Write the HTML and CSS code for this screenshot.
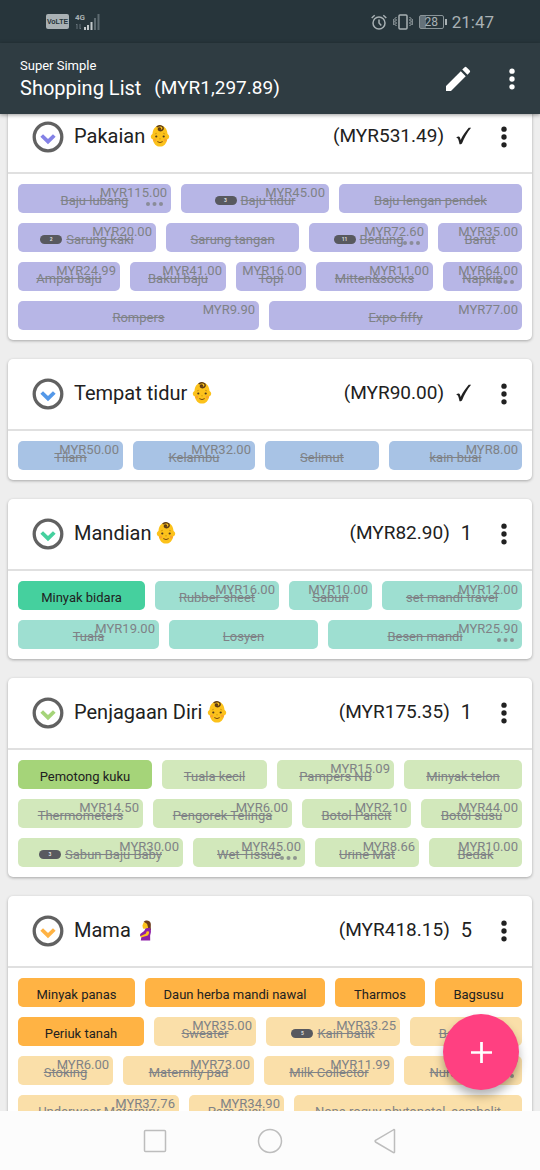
FILE: index.html
```
<!DOCTYPE html>
<html lang="ms">
<head>
<meta charset="utf-8">
<meta name="viewport" content="width=device-width, initial-scale=1">
<title>Shopping List</title>
<link rel="stylesheet" href="styles.css">
</head>
<body>
<svg class="sprite" aria-hidden="true">
  <symbol id="dots" viewBox="0 0 24 24"><circle cx="12" cy="3.500" r="2.900"/><circle cx="12" cy="12" r="2.900"/><circle cx="12" cy="20.500" r="2.900"/></symbol>
  <symbol id="more" viewBox="0 0 17 4"><circle cx="2" cy="2" r="2"/><circle cx="8.500" cy="2" r="2"/><circle cx="15" cy="2" r="2"/></symbol>
  <symbol id="fold" viewBox="0 0 32 32"><circle cx="16" cy="16" r="13.800" fill="none" stroke="#616161" stroke-width="3.300"/><path d="M9.700 14.500l6.300 6.200 6.300-6.200" fill="none" stroke="currentColor" stroke-width="3.800"/></symbol>
  <symbol id="check" viewBox="0 0 16 18"><path d="M.6 10.800c1.600-1.500 3-1.700 3.600-.8.5.8.7 2 .9 2.900C7.600 8 10.300 4.200 13.200.8h2.400C11.800 5.500 8.700 10.700 6.500 16.400c-.7.600-1.600.9-2.500.9C3.600 14.900 3 12.800 2.300 11.500c-.3-.5-.8-.7-1.700-.7z"/></symbol>
  <symbol id="baby" viewBox="0 0 20 22">
    <path d="M10 .6c4.200 0 7 3 7.500 8.200.2.700 1.700 1 1.700 2.700s-1 2.600-1.900 2.700C16.500 18.700 13.700 21.600 10 21.600S3.500 18.700 2.700 14.200C1.800 14.100.8 13.200.8 11.500s1.500-2 1.700-2.700C3 3.600 5.800.6 10 .6z" fill="#fcc21b"/>
    <path d="M7.200 1.600C9.500.1 13 .7 13.200 3c.1 2-2.300 3.200-4 2.300-1.200-.7-.9-2.200.3-2.200.9 0 1 .8.600 1.100" fill="none" stroke="#5d3b14" stroke-width="1.500" stroke-linecap="round"/>
    <circle cx="6.300" cy="11.500" r="1.100" fill="#4e3a1e"/><circle cx="13.700" cy="11.500" r="1.100" fill="#4e3a1e"/>
    <path d="M4.900 9l2-.8M15.100 9l-2-.8M9.300 13.800h1.400" stroke="#c78f10" stroke-width=".8"/>
    <path d="M7.300 16.600q2.700 2 5.400 0" fill="none" stroke="#7a4b10" stroke-width="1"/>
    <circle cx="4.700" cy="15" r="1.500" fill="#fba52c"/><circle cx="15.300" cy="15" r="1.500" fill="#fba52c"/>
  </symbol>
  <symbol id="mother" viewBox="0 0 20 24">
    <path d="M7.500 3C9.500.8 14.300 1 15.100 4.600c.5 2.300-.3 4.200.4 7.400l-5 .5L10.500 6z" fill="#6d3c1b"/>
    <path d="M7.500 3.600c1.800.2 3 .9 3.800 2.200L12.500 10l-3.600.6c-1.700.2-2.400-.4-2.400-1.400l-.4-2z" fill="#fcc21b"/>
    <path d="M9.500 10.300l4.500-.7c1.300.9 1.600 3 1.300 5l-.8 3.400.1 5.500H4.300l.7-4.200c-1.600-.6-2-1.900-1-3.200L8 13z" fill="#8e1fa8"/>
    <path d="M13.300 13.500c.4 2-.5 4-2.200 4.900l-6.600 1.900-.8-1.500 6-2.700 1.200-2.800z" fill="#fcc21b"/>
  </symbol>
</svg>

<div class="app">
  <div class="status">
    <div class="status-side">
      <span class="volte">VoLTE</span>
      <svg class="signal" viewBox="0 0 26 18" role="img" aria-label="4G signal">
        <text x="0" y="7">4G</text>
        <path d="M9 14h2v3H9zM12 12h2v5h-2zM15.500 9h2v8h-2z" fill="#c3c9cb"/>
        <path d="M19 5h2v12h-2zM22.500 1h2v16h-2z" fill="#5d6a70"/>
        <path d="M2 11v5M5 11v5M1 12l1-1M5 16l1-1" stroke="#66737a" fill="none"/>
      </svg>
    </div>
    <div class="status-side">
      <svg class="alarm line" viewBox="0 0 16 16" role="img" aria-label="Alarm"><circle cx="8" cy="9" r="6"/><path d="M8 5.500V9l2.300 2.500M.7 4l3-2.700M15.300 4l-3-2.700"/></svg>
      <svg class="vibrate line" viewBox="0 0 20 16" role="img" aria-label="Vibrate"><rect x="6" y="1" width="8" height="14" rx="1"/><path d="M3.500 3L2 4.500 3.500 6 2 7.500 3.500 9 2 10.500 3.500 12M16.500 3L18 4.500 16.500 6 18 7.500 16.500 9 18 10.500 16.500 12M.8 5v6M19.200 5v6" stroke-width="1"/></svg>
      <span class="battery">28</span>
      <span class="clock">21:47</span>
    </div>
  </div>

  <header class="toolbar">
    <div class="titles">
      <div class="subtitle">Super Simple</div>
      <h1 class="title"><span>Shopping List</span><span class="total">(MYR1,297.89)</span></h1>
    </div>
    <button class="icon-btn" aria-label="Edit"><svg class="pencil" viewBox="0 0 24 24"><path d="M3 17.250V21h3.750L17.800 9.900l-3.700-3.700zM20.700 7.200a1.200 1.200 0 0 0 0-1.700l-2.200-2.200a1.200 1.200 0 0 0-1.700 0L15.200 4.900l3.900 3.900z"/></svg></button>
    <button class="icon-btn" aria-label="More options"><svg class="kebab"><use href="#dots"/></svg></button>
  </header>

  <main class="content">
    <div class="lists">

      <section class="card purple">
        <div class="card-head">
          <button class="fold" aria-label="Collapse"><svg><use href="#fold"/></svg></button>
          <h2>Pakaian</h2><svg class="emoji" role="img" aria-label="Baby"><use href="#baby"/></svg>
          <span class="sum">(MYR531.49)</span><svg class="check" role="img" aria-label="Done"><use href="#check"/></svg>
          <button class="icon-btn menu" aria-label="List options"><svg class="kebab"><use href="#dots"/></svg></button>
        </div>
        <div class="rows">
          <div class="row">
            <button class="chip done" style="flex-grow:153"><s>Baju lubang</s><span class="price">MYR115.00</span><svg class="more"><use href="#more"/></svg></button>
            <button class="chip done" style="flex-grow:148"><b class="qty">3</b><s>Baju tidur</s><span class="price">MYR45.00</span></button>
            <button class="chip done" style="flex-grow:183"><s>Baju lengan pendek</s></button>
          </div>
          <div class="row">
            <button class="chip done" style="flex-grow:138"><b class="qty">2</b><s>Sarung kaki</s><span class="price">MYR20.00</span></button>
            <button class="chip done" style="flex-grow:133"><s>Sarung tangan</s></button>
            <button class="chip done" style="flex-grow:119"><b class="qty">11</b><s>Bedung</s><span class="price">MYR72.60</span><svg class="more"><use href="#more"/></svg></button>
            <button class="chip done" style="flex-grow:84"><s>Barut</s><span class="price">MYR35.00</span></button>
          </div>
          <div class="row">
            <button class="chip done" style="flex-grow:102"><s>Ampai baju</s><span class="price">MYR24.99</span></button>
            <button class="chip done" style="flex-grow:96"><s>Bakul baju</s><span class="price">MYR41.00</span></button>
            <button class="chip done" style="flex-grow:70"><s>Topi</s><span class="price">MYR16.00</span></button>
            <button class="chip done" style="flex-grow:117"><s>Mitten&amp;socks</s><span class="price">MYR11.00</span></button>
            <button class="chip done" style="flex-grow:79"><s>Napkin</s><span class="price">MYR64.00</span><svg class="more"><use href="#more"/></svg></button>
          </div>
          <div class="row">
            <button class="chip done" style="flex-grow:241"><s>Rompers</s><span class="price">MYR9.90</span></button>
            <button class="chip done" style="flex-grow:253"><s>Expo fiffy</s><span class="price">MYR77.00</span></button>
          </div>
        </div>
      </section>

      <section class="card blue">
        <div class="card-head">
          <button class="fold" aria-label="Collapse"><svg><use href="#fold"/></svg></button>
          <h2>Tempat tidur</h2><svg class="emoji" role="img" aria-label="Baby"><use href="#baby"/></svg>
          <span class="sum">(MYR90.00)</span><svg class="check" role="img" aria-label="Done"><use href="#check"/></svg>
          <button class="icon-btn menu" aria-label="List options"><svg class="kebab"><use href="#dots"/></svg></button>
        </div>
        <div class="rows">
          <div class="row">
            <button class="chip done" style="flex-grow:105"><s>Tilam</s><span class="price">MYR50.00</span></button>
            <button class="chip done" style="flex-grow:122"><s>Kelambu</s><span class="price">MYR32.00</span></button>
            <button class="chip done" style="flex-grow:114"><s>Selimut</s></button>
            <button class="chip done" style="flex-grow:133"><s>kain buai</s><span class="price">MYR8.00</span></button>
          </div>
        </div>
      </section>

      <section class="card teal">
        <div class="card-head">
          <button class="fold" aria-label="Collapse"><svg><use href="#fold"/></svg></button>
          <h2>Mandian</h2><svg class="emoji" role="img" aria-label="Baby"><use href="#baby"/></svg>
          <span class="sum">(MYR82.90)</span><span class="left">1</span>
          <button class="icon-btn menu" aria-label="List options"><svg class="kebab"><use href="#dots"/></svg></button>
        </div>
        <div class="rows">
          <div class="row">
            <button class="chip" style="flex-grow:127">Minyak bidara</button>
            <button class="chip done" style="flex-grow:124"><s>Rubber sheet</s><span class="price">MYR16.00</span></button>
            <button class="chip done" style="flex-grow:83"><s>Sabun</s><span class="price">MYR10.00</span></button>
            <button class="chip done" style="flex-grow:140"><s>set mandi travel</s><span class="price">MYR12.00</span></button>
          </div>
          <div class="row">
            <button class="chip done" style="flex-grow:141"><s>Tuala</s><span class="price">MYR19.00</span></button>
            <button class="chip done" style="flex-grow:149"><s>Losyen</s></button>
            <button class="chip done" style="flex-grow:194"><s>Besen mandi</s><span class="price">MYR25.90</span><svg class="more"><use href="#more"/></svg></button>
          </div>
        </div>
      </section>

      <section class="card green">
        <div class="card-head">
          <button class="fold" aria-label="Collapse"><svg><use href="#fold"/></svg></button>
          <h2>Penjagaan Diri</h2><svg class="emoji" role="img" aria-label="Baby"><use href="#baby"/></svg>
          <span class="sum">(MYR175.35)</span><span class="left">1</span>
          <button class="icon-btn menu" aria-label="List options"><svg class="kebab"><use href="#dots"/></svg></button>
        </div>
        <div class="rows">
          <div class="row">
            <button class="chip" style="flex-grow:134">Pemotong kuku</button>
            <button class="chip done" style="flex-grow:105"><s>Tuala kecil</s></button>
            <button class="chip done" style="flex-grow:117"><s>Pampers NB</s><span class="price">MYR15.09</span></button>
            <button class="chip done" style="flex-grow:118"><s>Minyak telon</s></button>
          </div>
          <div class="row">
            <button class="chip done" style="flex-grow:125"><s>Thermometers</s><span class="price">MYR14.50</span></button>
            <button class="chip done" style="flex-grow:139"><s>Pengorek Telinga</s><span class="price">MYR6.00</span></button>
            <button class="chip done" style="flex-grow:109"><s>Botol Pancit</s><span class="price">MYR2.10</span></button>
            <button class="chip done" style="flex-grow:101"><s>Botol susu</s><span class="price">MYR44.00</span></button>
          </div>
          <div class="row">
            <button class="chip done" style="flex-grow:165"><b class="qty">3</b><s>Sabun Baju Baby</s><span class="price">MYR30.00</span></button>
            <button class="chip done" style="flex-grow:112"><s>Wet Tissue</s><span class="price">MYR45.00</span><svg class="more"><use href="#more"/></svg></button>
            <button class="chip done" style="flex-grow:104"><s>Urine Mat</s><span class="price">MYR8.66</span></button>
            <button class="chip done" style="flex-grow:93"><s>Bedak</s><span class="price">MYR10.00</span></button>
          </div>
        </div>
      </section>

      <section class="card orange">
        <div class="card-head">
          <button class="fold" aria-label="Collapse"><svg><use href="#fold"/></svg></button>
          <h2>Mama</h2><svg class="emoji" role="img" aria-label="Pregnant woman"><use href="#mother"/></svg>
          <span class="sum">(MYR418.15)</span><span class="left">5</span>
          <button class="icon-btn menu" aria-label="List options"><svg class="kebab"><use href="#dots"/></svg></button>
        </div>
        <div class="rows">
          <div class="row">
            <button class="chip" style="flex-grow:117">Minyak panas</button>
            <button class="chip" style="flex-grow:180">Daun herba mandi nawal</button>
            <button class="chip" style="flex-grow:90">Tharmos</button>
            <button class="chip" style="flex-grow:87">Bagsusu</button>
          </div>
          <div class="row">
            <button class="chip" style="flex-grow:126">Periuk tanah</button>
            <button class="chip done" style="flex-grow:102"><s>Sweater</s><span class="price">MYR35.00</span></button>
            <button class="chip done" style="flex-grow:134"><b class="qty">5</b><s>Kain batik</s><span class="price">MYR33.25</span></button>
            <button class="chip done" style="flex-grow:112"><s>Baju baru</s></button>
          </div>
          <div class="row">
            <button class="chip done" style="flex-grow:95"><s>Stoking</s><span class="price">MYR6.00</span></button>
            <button class="chip done" style="flex-grow:131"><s>Maternity pad</s><span class="price">MYR73.00</span></button>
            <button class="chip done" style="flex-grow:130"><s>Milk Collector</s><span class="price">MYR11.99</span></button>
            <button class="chip done" style="flex-grow:118"><s>Nursing bra</s><span class="price">MYR57.97</span><svg class="more"><use href="#more"/></svg></button>
          </div>
          <div class="row">
            <button class="chip done" style="flex-grow:161"><s>Underwear Materniry</s><span class="price">MYR37.76</span></button>
            <button class="chip done" style="flex-grow:95"><s>Pam susu</s><span class="price">MYR34.90</span></button>
            <button class="chip done" style="flex-grow:228"><s>Nona roguy phytonatal, sembelit</s></button>
          </div>
        </div>
      </section>
    </div>
    <button class="fab" aria-label="Add list"><svg viewBox="0 0 20 20"><path d="M10 0v20M0 10h20" stroke="#fff" stroke-width="2.600"/></svg></button>
  </main>

  <nav class="navbar">
    <button class="nav-btn" aria-label="Recent"><svg viewBox="0 0 24 24"><rect x="1.500" y="1.500" width="21" height="21" rx="1"/></svg></button>
    <button class="nav-btn" aria-label="Home"><svg viewBox="0 0 24 24"><circle cx="12" cy="12" r="11.500"/></svg></button>
    <button class="nav-btn" aria-label="Back"><svg viewBox="0 0 24 24"><path d="M21.500 1.500v21.500a.6.600 0 0 1-1 .5L2.500 13a1 1 0 0 1 0-1.600L20.500.8a.6.600 0 0 1 1 .7z"/></svg></button>
  </nav>
</div>
</body>
</html>
```
FILE: styles.css
```
* { box-sizing: border-box; }
body { margin: 0; font-family: Roboto, "Liberation Sans", sans-serif; color: #212121; }
button { margin: 0; padding: 0; border: 0; background: none; font: inherit; color: inherit; cursor: pointer; }
svg { display: block; fill: currentColor; }
.sprite { position: absolute; width: 0; height: 0; }
.app { display: flex; flex-direction: column; height: 100vh; background: #eee; }

.status { display: flex; justify-content: space-between; align-items: center; height: 43px; padding: 0 46px; flex: none; background: #27353b; color: #a9b1b4; }
.status-side { display: flex; align-items: center; gap: 6px; }
.volte { padding: 0 1px; border-radius: 2px; background: #a9b1b4; color: #27353b; font-family: "Liberation Sans", sans-serif; font-size: 7px; font-weight: 700; line-height: 15px; }
.signal { width: 26px; height: 18px; }
.signal text { font-size: 8px; font-weight: 700; }
.line { fill: none; stroke: currentColor; stroke-width: 1.500; }
.alarm { width: 16px; height: 16px; }
.vibrate { width: 20px; height: 16px; }
.battery { position: relative; width: 25px; border: 1px solid #8a9498; border-radius: 2px; background: linear-gradient(90deg, #65727a 28%, transparent 28%); font-size: 12px; line-height: 12px; text-align: center; }
.battery::after { content: ""; position: absolute; top: 3px; right: -4px; width: 2px; height: 6px; background: #a9b1b4; }
.clock { margin-left: 2px; font-size: 17px; line-height: 20px; }

.toolbar { display: flex; align-items: center; flex: none; height: 71px; padding: 0 8px 0 20px; background: #2f3c42; color: #fff; box-shadow: 0 1px 4px rgba(0, 0, 0, .4); z-index: 1; }
.titles { flex: 1; }
.subtitle { font-size: 13px; line-height: 18px; }
.title { display: flex; gap: 13px; margin: 0; font-size: 20px; font-weight: 400; line-height: 26px; }
.total { font-size: 19px; }
.icon-btn { display: flex; justify-content: center; align-items: center; width: 40px; height: 40px; }
.toolbar .icon-btn:first-of-type { margin-right: 14px; }
.pencil { width: 32px; height: 32px; }
.kebab { width: 22px; height: 22px; }

.content { position: relative; flex: 1; min-height: 0; overflow: hidden; }
.lists { display: flex; flex-direction: column; gap: 19px; margin-top: -12px; padding: 0 8px; }
.card { border-radius: 5px; background: #fff; box-shadow: 0 1px 3px rgba(0, 0, 0, .3); }
.card-head { display: flex; align-items: center; height: 72px; padding: 0 8px 0 24px; border-bottom: 2px solid #e0e0e0; font-size: 20px; line-height: 28px; }
.card-head h2 { margin: 0 5px 0 10px; padding-bottom: 2px; font-size: 20px; font-weight: 400; line-height: 28px; white-space: nowrap; }
.fold svg { width: 32px; height: 32px; }
.fold { color: var(--accent); }
.emoji { width: 20px; height: 22px; margin-bottom: 2px; }
.sum { margin-left: auto; font-size: 19px; }
.left, .check { margin-left: 11px; }
.sum, .left { padding-bottom: 2px; }
.check { width: 17px; height: 18px; margin-bottom: 2px; }
.menu { margin-left: 12px; }

.rows { display: flex; flex-direction: column; gap: 10px; padding: 10px; }
.row { display: flex; gap: 10px; }
.chip { position: relative; display: flex; flex: 1 1 0; min-width: 0; justify-content: center; align-items: center; gap: 4px; height: 29px; padding-top: 4px; border-radius: 5px; background: var(--accent); font-size: 13px; line-height: 16px; white-space: nowrap; }
.chip.done { background: var(--muted); color: #7f8286; }
.price { position: absolute; top: 1px; right: 4px; line-height: 16px; }
.more { position: absolute; right: 8px; bottom: 7px; width: 17px; height: 4px; opacity: .8; }
.qty { width: 22px; border-radius: 5px; background: #58595f; color: #ddd; font-size: 5px; line-height: 9px; text-align: center; }

.purple { --accent: #8482e6; --muted: #b7b6e6; }
.blue { --accent: #5498e8; --muted: #a8c3e5; }
.teal { --accent: #45d09e; --muted: #9edfd1; }
.green { --accent: #a5d479; --muted: #d2e8bb; }
.orange { --accent: #ffb344; --muted: #fadfa9; }

.fab { position: absolute; right: 21px; bottom: 21px; display: flex; justify-content: center; align-items: center; width: 76px; height: 76px; border-radius: 50%; background: #ff4081; box-shadow: 0 6px 10px rgba(0, 0, 0, .3); }
.fab svg { width: 21px; height: 21px; }

.navbar { display: flex; justify-content: center; align-items: center; gap: 91px; flex: none; height: 59px; background: #fcfcfc; z-index: 1; }
.nav-btn svg { width: 24px; height: 24px; fill: none; stroke: #bdbdbd; stroke-width: 1.500; overflow: visible; }
```
